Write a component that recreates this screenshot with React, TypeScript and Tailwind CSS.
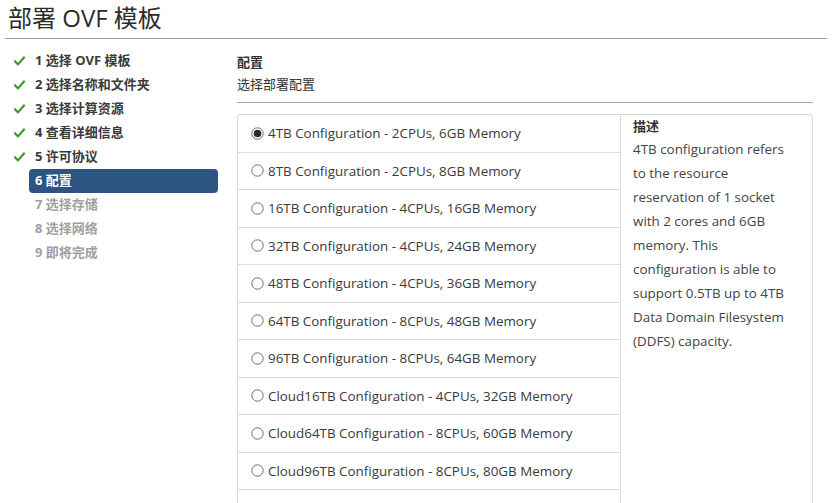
import React from "react";

const steps = [
  { n: 1, label: "选择 OVF 模板", state: "done" },
  { n: 2, label: "选择名称和文件夹", state: "done" },
  { n: 3, label: "选择计算资源", state: "done" },
  { n: 4, label: "查看详细信息", state: "done" },
  { n: 5, label: "许可协议", state: "done" },
  { n: 6, label: "配置", state: "active" },
  { n: 7, label: "选择存储", state: "todo" },
  { n: 8, label: "选择网络", state: "todo" },
  { n: 9, label: "即将完成", state: "todo" },
];

const configs = [
  "4TB Configuration - 2CPUs, 6GB Memory",
  "8TB Configuration - 2CPUs, 8GB Memory",
  "16TB Configuration - 4CPUs, 16GB Memory",
  "32TB Configuration - 4CPUs, 24GB Memory",
  "48TB Configuration - 4CPUs, 36GB Memory",
  "64TB Configuration - 8CPUs, 48GB Memory",
  "96TB Configuration - 8CPUs, 64GB Memory",
  "Cloud16TB Configuration - 4CPUs, 32GB Memory",
  "Cloud64TB Configuration - 8CPUs, 60GB Memory",
  "Cloud96TB Configuration - 8CPUs, 80GB Memory",
  "",
];

const font = "font-['Open_Sans','Noto_Sans_CJK_SC',sans-serif]";

function Check() {
  return (
    <svg className="w-[11px] h-[10px]" viewBox="0 0 11 10" fill="none">
      <path d="M1 5.2l3 3.2L10 1.5" stroke="#3f9a2b" strokeWidth="2.2" strokeLinecap="round" strokeLinejoin="round" />
    </svg>
  );
}

function Radio({ checked }: { checked: boolean }) {
  return (
    <svg className="w-[13px] h-[13px] shrink-0" viewBox="0 0 13 13">
      <circle cx="6.5" cy="6.5" r="5.7" fill="white" stroke="#6b6b6b" strokeWidth="1" />
      {checked && <circle cx="6.5" cy="6.5" r="3.8" fill="#2b2b2b" />}
    </svg>
  );
}

export default function App() {
  return (
    <div className={`h-[503px] w-[832px] overflow-hidden bg-white text-[#333] ${font}`}>
      {/* Title */}
      <div className="mx-[5px] border-b border-[#9a9a9a] h-[39px]">
        <h1 className="pl-[3px] pt-[2px] text-[24px] leading-[32px] font-normal text-[#2b2b2b]">部署 OVF 模板</h1>
      </div>

      <div className="flex">
        {/* Steps */}
        <nav className="w-[237px] shrink-0 pt-[10px] pl-[14px] pr-[19px]">
          {steps.map((s) => (
            <div key={s.n} className="flex items-center h-[24px]">
              <div className="w-[15px] flex items-center">{s.state === "done" && <Check />}</div>
              <div
                className={`flex-1 h-[24px] flex items-center px-[6px] rounded-[4px] text-[13px] font-bold ${
                  s.state === "active"
                    ? "bg-[#2d5482] text-white"
                    : s.state === "done"
                    ? "text-[#3a3a3a]"
                    : "text-[#a0a0a0]"
                }`}
              >
                {s.n} {s.label}
              </div>
            </div>
          ))}
        </nav>

        {/* Main */}
        <main className="flex-1 pr-[19px]">
          <div className="border-b border-[#a8a8a8] pt-[13px] pb-[6px]">
            <div className="text-[13px] font-bold leading-[20px] text-[#333]">配置</div>
            <div className="text-[13px] leading-[24px] text-[#333]">选择部署配置</div>
          </div>
          <div className="mt-[11px] flex border border-[#d9d9d9] rounded-[3px]">
            <div className="w-[383px] border-r border-[#d9d9d9]">
              {configs.map((c, i) => (
                <div
                  key={i}
                  className="h-[37.5px] flex items-center gap-[4px] pl-[13px] border-b border-[#dcdcdc] text-[13.4px] text-[#3a3a3a]"
                >
                  {c && <Radio checked={i === 0} />}
                  <span>{c}</span>
                </div>
              ))}
            </div>
            <div className="flex-1 pl-[12px] pr-[20px] text-[13.4px] text-[#444]">
              <div className="font-bold text-[13px] leading-[22px] text-[#333]">描述</div>
              <p className="leading-[24px]">
                4TB configuration refers to the resource reservation of 1 socket with 2 cores and 6GB memory. This
                configuration is able to support 0.5TB up to 4TB Data Domain Filesystem (DDFS) capacity.
              </p>
            </div>
          </div>
        </main>
      </div>
    </div>
  );
}
